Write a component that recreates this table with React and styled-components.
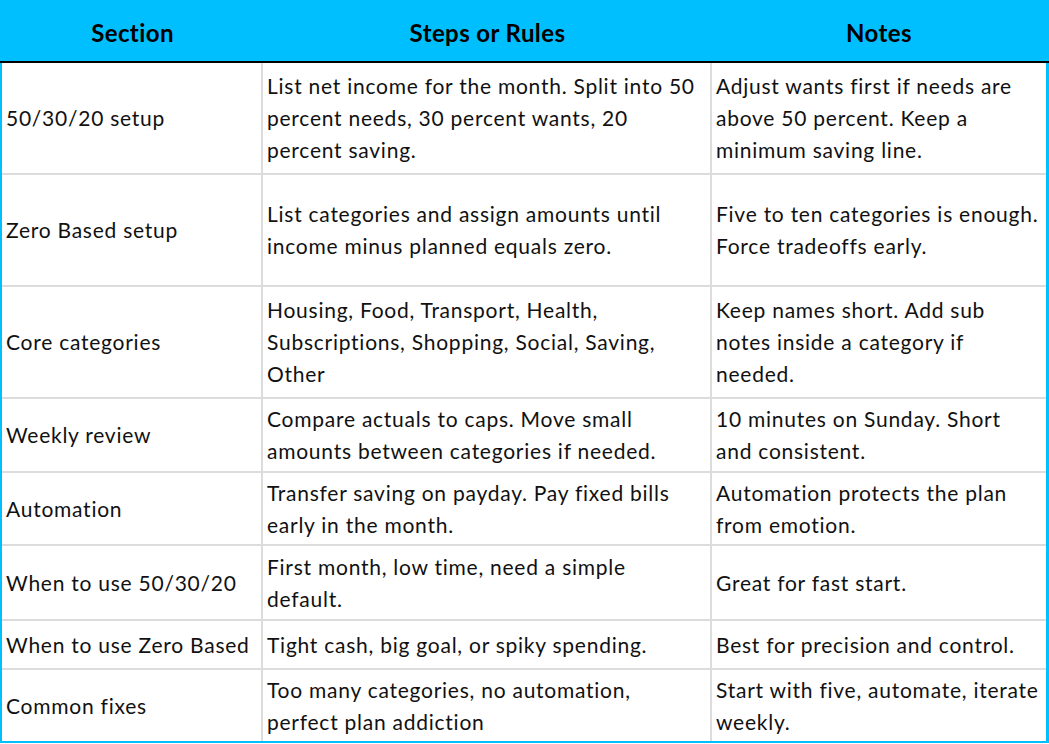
import React from "react";
import styled, { createGlobalStyle } from "styled-components";

const rows = [
  {
    height: 112,
    section: "50/30/20 setup",
    steps: [
      "List net income for the month. Split into 50",
      "percent needs, 30 percent wants, 20",
      "percent saving.",
    ],
    notes: ["Adjust wants first if needs are", "above 50 percent. Keep a", "minimum saving line."],
  },
  {
    height: 112,
    section: "Zero Based setup",
    steps: ["List categories and assign amounts until", "income minus planned equals zero."],
    notes: ["Five to ten categories is enough.", "Force tradeoffs early."],
  },
  {
    height: 112,
    section: "Core categories",
    steps: ["Housing, Food, Transport, Health,", "Subscriptions, Shopping, Social, Saving,", "Other"],
    notes: ["Keep names short. Add sub", "notes inside a category if", "needed."],
  },
  {
    height: 74,
    section: "Weekly review",
    steps: ["Compare actuals to caps. Move small", "amounts between categories if needed."],
    notes: ["10 minutes on Sunday. Short", "and consistent."],
  },
  {
    height: 73,
    section: "Automation",
    steps: ["Transfer saving on payday. Pay fixed bills", "early in the month."],
    notes: ["Automation protects the plan", "from emotion."],
  },
  {
    height: 75,
    section: "When to use 50/30/20",
    steps: ["First month, low time, need a simple", "default."],
    notes: ["Great for fast start."],
  },
  {
    height: 49,
    section: "When to use Zero Based",
    steps: ["Tight cash, big goal, or spiky spending."],
    notes: ["Best for precision and control."],
  },
  {
    height: 71,
    section: "Common fixes",
    steps: ["Too many categories, no automation,", "perfect plan addiction"],
    notes: ["Start with five, automate, iterate", "weekly."],
    last: true,
  },
];

const App = () => {
  return (
    <>
      <GlobalStyle />
      <Sheet>
        <HeaderRow>
          <HeadCell>Section</HeadCell>
          <HeadCell>Steps or Rules</HeadCell>
          <HeadCell>Notes</HeadCell>
        </HeaderRow>
        {rows.map((row) => (
          <Row key={row.section} $height={row.height} $last={row.last}>
            <Cell>
              <Line>{row.section}</Line>
            </Cell>
            <Cell>
              {row.steps.map((line) => (
                <Line key={line}>{line}</Line>
              ))}
            </Cell>
            <Cell $end>
              {row.notes.map((line) => (
                <Line key={line}>{line}</Line>
              ))}
            </Cell>
          </Row>
        ))}
      </Sheet>
    </>
  );
};

const GlobalStyle = createGlobalStyle`
  html, body {
    margin: 0;
    padding: 0;
    background: #ffffff;
  }
  body {
    font-family: Lato, "Open Sans", "Liberation Sans", sans-serif;
    color: #111111;
  }
`;

const Sheet = styled.div`
  box-sizing: border-box;
  width: 1049px;
  border-left: 2px solid #00bfff;
  border-right: 3px solid #00bfff;
  border-bottom: 2px solid #00bfff;
  background: #ffffff;
`;

const HeaderRow = styled.div`
  display: grid;
  grid-template-columns: 261px 449px 1fr;
  height: 63px;
  box-sizing: border-box;
  margin-left: -2px;
  margin-right: -3px;
  padding-left: 2px;
  padding-right: 3px;
  background: #00bfff;
  border-bottom: 2px solid #000000;
`;

const HeadCell = styled.div`
  display: flex;
  align-items: center;
  justify-content: center;
  font-size: 24px;
  font-weight: 700;
  letter-spacing: 0.4px;
  color: #000000;
  padding-top: 3px;
`;

const Row = styled.div`
  display: grid;
  grid-template-columns: 261px 449px 1fr;
  box-sizing: border-box;
  height: ${(p) => p.$height}px;
  border-bottom: ${(p) => (p.$last ? "none" : "2px solid #dcdcdc")};
`;

const Cell = styled.div`
  display: flex;
  flex-direction: column;
  justify-content: center;
  padding: 0 0 0 4px;
  border-right: ${(p) => (p.$end ? "none" : "2px solid #dcdcdc")};
  font-size: 21px;
  line-height: 32px;
  overflow: hidden;
`;

const Line = styled.span`
  display: block;
  white-space: nowrap;
  letter-spacing: 0.75px;
`;

export default App;
